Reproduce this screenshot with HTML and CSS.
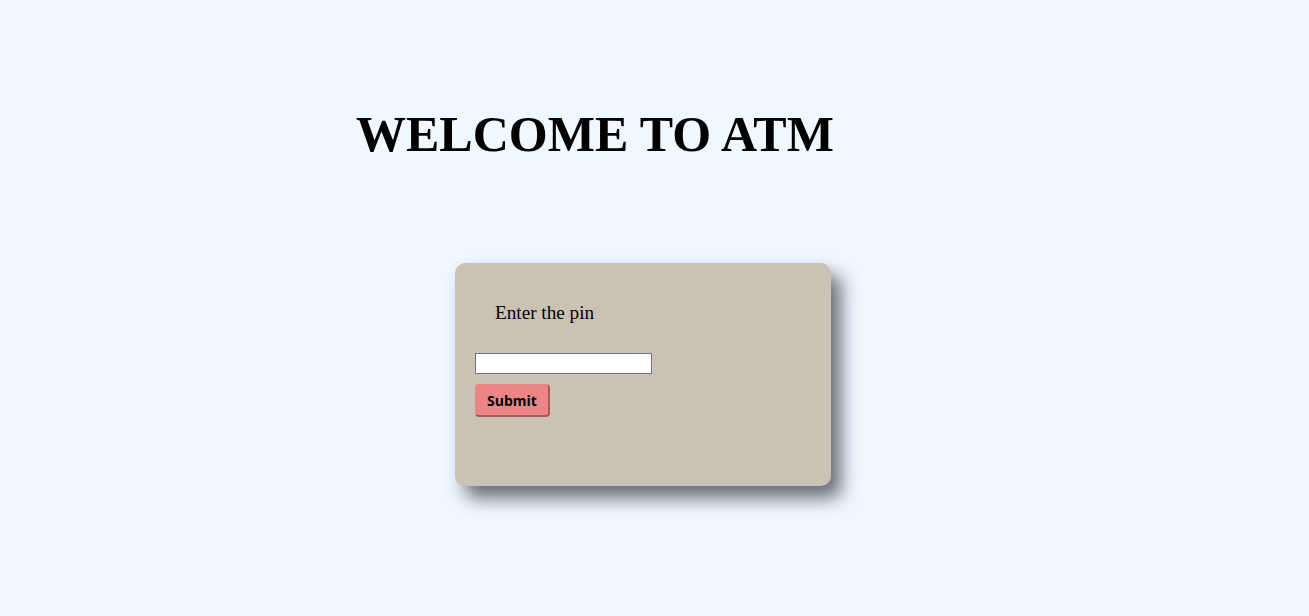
FILE: index.html
```html
<!DOCTYPE html>
<html>
<head>
<meta charset="utf-8">
<title>ATM</title>
<link rel="stylesheet" href="styles.css">
</head>
<body>
<h1 class="title">WELCOME TO ATM</h1>
<div class="card">
  <p class="label">Enter the pin</p>
  <input class="pin" type="password">
  <button class="submit">Submit</button>
</div>
</body>
</html>
```

FILE: styles.css
```css
html, body {
  margin: 0;
  padding: 0;
}
body {
  background: #eff7ff;
  font-family: "Liberation Serif", "Times New Roman", serif;
  color: #000;
  height: 616px;
  overflow: hidden;
}
.title {
  margin: 0;
  padding: 107px 0 0 356px;
  font-size: 50px;
  font-weight: bold;
  line-height: 55px;
}
.card {
  margin: 101px 0 0 455px;
  width: 376px;
  height: 223px;
  box-sizing: border-box;
  background: #cbc2b6;
  border-radius: 10px;
  box-shadow: 10px 12px 18px rgba(70, 75, 80, 0.8);
  padding: 39px 20px 0 20px;
  display: flex;
  flex-direction: column;
  align-items: flex-start;
}
.label {
  margin: 0 0 30px 20px;
  font-size: 19.2px;
  line-height: 21px;
}
.pin {
  width: 177px;
  height: 21px;
  box-sizing: border-box;
  margin: 0;
  border: 1px solid #767676;
  background: #fff;
  padding: 1px 2px;
}
.submit {
  margin-top: 10px;
  width: 75px;
  height: 33px;
  box-sizing: border-box;
  background: #ec8686;
  border: 1px solid #ec8686;
  border-right: 2px solid #a85a5a;
  border-bottom: 2px solid #a85a5a;
  border-radius: 4px;
  font-family: "Open Sans", "Noto Sans", sans-serif;
  font-weight: bold;
  font-size: 14px;
  color: #000;
  padding: 0;
}
```
